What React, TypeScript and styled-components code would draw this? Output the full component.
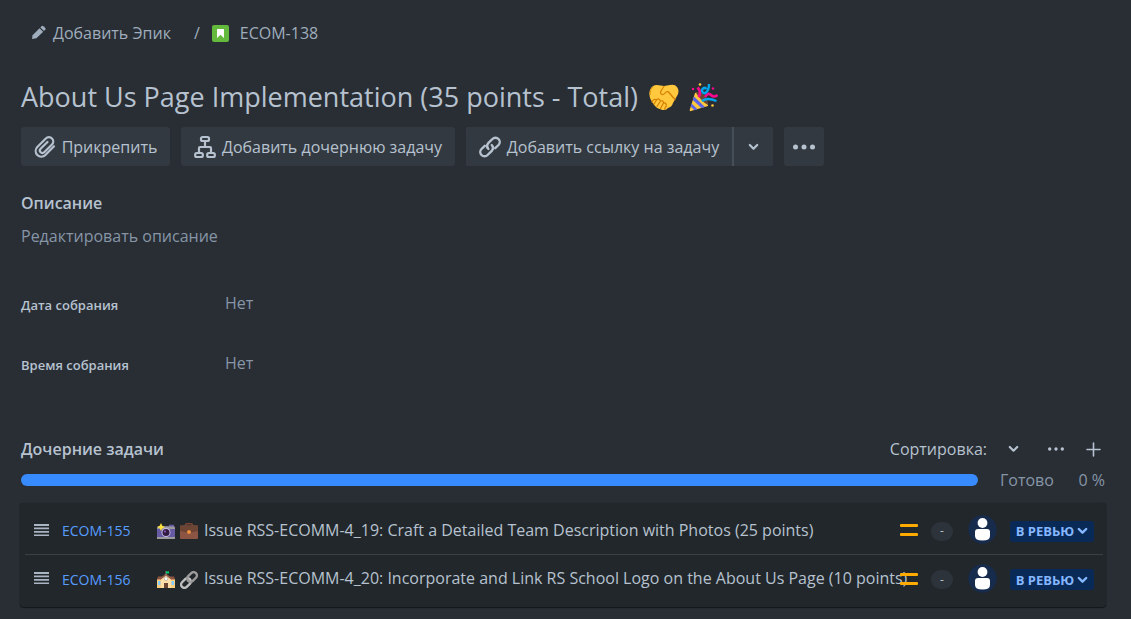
import React from "react";
import styled, { createGlobalStyle } from "styled-components";

const GlobalStyle = createGlobalStyle`
  *, *::before, *::after { box-sizing: border-box; }
  body {
    margin: 0;
    background: #292d34;
    color: #b6c2cf;
    font-family: "Open Sans", "Noto Sans", sans-serif;
    font-size: 16px;
    line-height: 20px;
  }
  button { font: inherit; color: inherit; border: 0; background: none; padding: 0; cursor: pointer; }
  a { text-decoration: none; color: inherit; }
  h1, h2, p, dl, dt, dd, ul { margin: 0; padding: 0; font-weight: 400; }
  svg { display: block; flex: none; }
`;

const Page = styled.main`
  padding: 22px 25px 12px 21px;
`;

const Breadcrumbs = styled.nav`
  display: flex;
  align-items: center;
  height: 22px;
  padding-left: 10px;
  color: #9fadbc;
`;

const EpicButton = styled.button`
  display: flex;
  align-items: center;
  gap: 6px;
`;

const Separator = styled.span`
  margin: 0 12px 0 23px;
`;

const IssueLink = styled.a`
  display: flex;
  align-items: center;
  gap: 11px;
`;

const Title = styled.h1`
  display: flex;
  align-items: center;
  gap: 10px;
  margin-top: 33px;
  font-size: 27px;
  line-height: 40px;
  white-space: nowrap;
`;

const TitleText = styled.span`
  margin-right: 1px;
`;

const Toolbar = styled.div`
  display: flex;
  margin-top: 10px;
  gap: 11px;
`;

const ToolButton = styled.button<{ $width: number; $side?: "left" | "right" }>`
  display: flex;
  align-items: center;
  justify-content: center;
  gap: 6px;
  width: ${(p) => p.$width}px;
  height: 39px;
  background: #333940;
  white-space: nowrap;
  border-radius: ${(p) =>
    p.$side === "left" ? "3px 0 0 3px" : p.$side === "right" ? "0 3px 3px 0" : "3px"};
`;

const SplitButton = styled.div`
  display: flex;
  gap: 2px;
  border-radius: 3px;
  background: #454f59;
`;

const SectionTitle = styled.h2`
  font-size: 16px;
  font-weight: 600;
  line-height: 20px;
`;

const Description = styled.section`
  margin-top: 27px;
`;

const EditDescription = styled.button`
  display: block;
  margin-top: 13px;
  color: #8696a7;
`;

const Fields = styled.dl`
  display: grid;
  grid-template-columns: 204px 1fr;
  row-gap: 40px;
  margin-top: 47px;
`;

const FieldName = styled.dt`
  padding-top: 2px;
  font-size: 13px;
  font-weight: 600;
  line-height: 20px;
  height: 20px;
`;

const FieldValue = styled.dd`
  color: #8696a7;
`;

const Children = styled.section`
  margin-top: 66px;
`;

const ChildrenHeader = styled.div`
  display: flex;
  align-items: center;
  height: 20px;
`;

const HeaderActions = styled.div`
  display: flex;
  align-items: center;
  margin-left: auto;
  padding-right: 5px;
`;

const SortLabel = styled.span`
  margin-right: 21px;
`;

const IconButton = styled.button<{ $gap?: number }>`
  display: flex;
  align-items: center;
  margin-left: ${(p) => p.$gap || 0}px;
`;

const ProgressRow = styled.div`
  display: flex;
  align-items: center;
  margin-top: 11px;
  color: #8696a7;
`;

const Track = styled.div`
  flex: 1;
  height: 12px;
  border-radius: 6px;
  background: #388bff;
`;

const ProgressLabel = styled.div`
  display: flex;
  justify-content: space-between;
  width: 108px;
  padding: 0 1px 0 2px;
  margin-left: 20px;
`;

const List = styled.ul`
  list-style: none;
  margin: 13px 0 0 -1px;
  padding: 3px 3px 3px 5px;
  border-radius: 4px;
  background: #22272b;
  box-shadow: 0 1px 1px rgba(3, 4, 4, 0.5), 0 0 1px rgba(3, 4, 4, 0.5);
`;

const Row = styled.li`
  display: flex;
  align-items: center;
  height: 48px;
  padding: 2px 9px 0 9px;
  & + & {
    height: 50px;
    border-top: 1px solid #3a4045;
    padding-top: 0;
  }
`;

const Key = styled.a`
  width: 95px;
  margin-left: 13px;
  color: #579dff;
  font-size: 14px;
  line-height: 20px;
`;

const Summary = styled.div`
  display: flex;
  flex: 1;
  min-width: 0;
  align-items: center;
  gap: 5px;
  white-space: nowrap;
`;

const SummaryText = styled.a`
  margin-left: 1px;
  padding-bottom: 3px;
`;

const Priority = styled.span`
  position: relative;
  margin-right: 13px;
`;

const Estimate = styled.button`
  width: 22px;
  height: 19px;
  border-radius: 10px;
  background: #2c333a;
  font-size: 12px;
  line-height: 18px;
`;

const Avatar = styled.span`
  margin: 0 13px 0 15px;
  padding-bottom: 3px;
`;

const Status = styled.button`
  display: flex;
  align-items: center;
  justify-content: center;
  gap: 3px;
  width: 84px;
  height: 21px;
  border-radius: 3px;
  background: #092957;
  color: #85b8ff;
  font-size: 13px;
  font-weight: 700;
  line-height: 20px;
  white-space: nowrap;
`;

const Pencil = () => (
  <svg width="16" height="16" viewBox="0 0 16 16" fill="#9fadbc" aria-hidden="true">
    <path d="M1 14 1.600 10.200 8.500 3.300 12.200 6.800 5.400 13.200Z" />
    <path d="M9.300 2.500 10.800 1.100Q11.600.5 12.400 1.200L14.300 3Q15 3.800 14.400 4.500L13 6Z" />
  </svg>
);

const Story = () => (
  <svg width="17" height="17" viewBox="0 0 17 17" aria-hidden="true">
    <rect width="17" height="17" rx="2" fill="#63ba3c" />
    <path d="M5 4.6Q5 4 5.600 4H11.400Q12 4 12 4.600V13L8.500 9.800 5 13Z" fill="#fff" />
  </svg>
);

const Clip = () => (
  <svg width="22" height="24" viewBox="0 0 22 24" fill="none" stroke="#b6c2cf" strokeWidth="2.2" strokeLinecap="round" aria-hidden="true">
    <path d="M20 11.300 11.400 20A5.600 5.600 0 0 1 3.300 20 5.800 5.800 0 0 1 3.300 12L11.800 3.500A4.200 4.200 0 0 1 18 3.600 4.300 4.300 0 0 1 18 9.600L10.200 17.300A2.500 2.500 0 0 1 6.600 17.300 2.500 2.500 0 0 1 6.600 13.800L13.500 7" />
  </svg>
);

const Tree = () => (
  <svg width="22" height="24" viewBox="0 0 22 24" fill="none" stroke="#b6c2cf" strokeWidth="2.2" aria-hidden="true">
    <rect x="7" y="2" width="8" height="4" rx="1.5" />
    <rect x="1.2" y="18" width="7.600" height="4" rx="1.5" />
    <rect x="13.2" y="18" width="7.600" height="4" rx="1.5" />
    <path d="M11 6V12M5 18V13Q5 12 6 12H16Q17 12 17 13V18" />
  </svg>
);

const Link = () => (
  <svg width="22" height="22" viewBox="0 0 22 22" fill="none" stroke="#b6c2cf" strokeWidth="2.4" strokeLinecap="round" aria-hidden="true">
    <path d="M9.400 13A4.200 4.200 0 0 1 9 7.400L13.400 3A4.200 4.200 0 0 1 19.500 3 4.300 4.300 0 0 1 19.500 9L16.200 12.200" />
    <path d="M12.700 9A4.200 4.200 0 0 1 13 14.600L8.600 19A4.200 4.200 0 0 1 2.500 19 4.300 4.300 0 0 1 2.500 13L5.800 9.800" />
  </svg>
);

const Chevron = ({ color = "#b6c2cf", thick = 2.2 }: { color?: string; thick?: number }) => (
  <svg width="11" height="8" viewBox="0 0 11 8" fill="none" stroke={color} strokeWidth={thick} strokeLinecap="round" strokeLinejoin="round" aria-hidden="true">
    <path d="M1.800 2 5.500 5.700 9.200 2" />
  </svg>
);

const Dots = ({ size }: { size: number }) => (
  <svg width={size} height="6" viewBox={`0 0 ${size} 6`} fill="#b6c2cf" aria-hidden="true">
    {[0, 1, 2].map((i) => {
      const r = size > 20 ? 2.5 : 1.7;
      return <circle key={i} cx={r + (i * (size - 2 * r)) / 2} cy="3" r={r} />;
    })}
  </svg>
);

const Plus = () => (
  <svg width="15" height="15" viewBox="0 0 15 15" stroke="#b6c2cf" strokeWidth="1.6" strokeLinecap="round" aria-hidden="true">
    <path d="M7.500 1V14M1 7.500H14" />
  </svg>
);

const Handle = () => (
  <svg width="15" height="15" viewBox="0 0 15 15" fill="#a9b5c2" aria-hidden="true">
    <path d="M0 0H15V2H0ZM0 3.500H15V5.200H0ZM0 7H15V8.700H0ZM0 10.500H15V12H0Z" />
  </svg>
);

const MediumIcon = () => (
  <svg width="18" height="14" viewBox="0 0 18 14" fill="#ffab00" role="img" aria-label="Medium">
    <rect width="18" height="3" rx="1" />
    <rect y="9" width="18" height="3" rx="1" />
  </svg>
);

const Person = () => (
  <svg width="29" height="29" viewBox="0 0 29 29" aria-hidden="true">
    <circle cx="14.500" cy="14.500" r="14.200" fill="#172b4d" />
    <circle cx="14.500" cy="8" r="4.900" fill="#fff" />
    <path d="M7 17Q7 14 10 14H19Q22 14 22 17V21Q22 25.500 14.500 25.500T7 21Z" fill="#fff" />
  </svg>
);

const Handshake = () => (
  <svg width="30" height="26" viewBox="0 0 30 26" aria-hidden="true">
    <path d="M8 1Q3 1 1 6-1 12 3 18L6 22Q8 25 12 25.500 17 27 19 24 23 23 24 19L28 12Q31 7 28 3 26 0 21 1L15 2Z" fill="#ffc83d" />
    <path d="M15 2.500 12.500 6Q10.500 9.500 13 10.500 15 11 17 8L19 7.500 26 15.500M3 18Q5 14 7.500 16 10 13.500 11.500 17 14.500 16 14.500 19 17.500 18.500 17.300 22M7.500 16 5 20M11.500 17 8 22.500M14.500 19 11.500 24.500M17.300 22 15.500 25" fill="none" stroke="#d67d00" strokeWidth="1.2" strokeLinecap="round" strokeLinejoin="round" />
    <path d="M1.200 11Q.8 5 4 2.500" fill="none" stroke="#e39d10" strokeWidth="1" />
  </svg>
);

const Party = () => (
  <svg width="29" height="29" viewBox="0 0 29 29" aria-hidden="true">
    <path d="M6 10 19 23Q17 16 12 11 8 8 6 10Z" fill="#6d4534" />
    <path d="M6 10Q10 9 14 14 19 19 19 23L2 28Q.5 28.500 .7 27Z" fill="#ffc83d" />
    <path d="M7 10Q11 8 15 12T19 22Q13 19 7 10Z" fill="#6d4534" />
    <path d="M5 13.500 16 24 12.500 25 3.800 17ZM2.500 20.500 8.500 26.200 5.500 27.200 1.600 23.500Z" fill="#5b63e8" />
    <path d="M9.500 14Q13 9 8.500 4.500" fill="none" stroke="#f70a8d" strokeWidth="2.600" />
    <path d="M16 14Q19 9 22 12T28.500 12" fill="none" stroke="#f70a8d" strokeWidth="2.600" />
    <path d="M13 18Q18 14 27.500 18M20 1Q20 7 17 9.500A2.500 2.500 0 1 1 17.500 6" fill="none" stroke="#00a6ed" strokeWidth="2.400" />
    <circle cx="11" cy="1.500" r="1.300" fill="#ffc83d" />
    <circle cx="23.500" cy="22.500" r="1.300" fill="#ffc83d" />
    <circle cx="4" cy="6" r="1.200" fill="#f70a8d" />
    <circle cx="24" cy="5.500" r="1.200" fill="#f70a8d" />
  </svg>
);

const Camera = () => (
  <svg width="18" height="16" viewBox="0 0 18 16" aria-hidden="true">
    <path d="M0 5 2 3H12V1.800H17V3L18 4V15H0Z" fill="#675aa5" />
    <path d="M0 5 1 3.500H17L18 5V6H0ZM0 14H18V16H0Z" fill="#9b9b9b" />
    <circle cx="9" cy="9.500" r="4.500" fill="#c5b9e8" />
    <circle cx="9" cy="9.500" r="3.500" fill="#321b41" />
    <circle cx="8" cy="8.500" r="1" fill="#8d65c5" />
    <path d="M4 0 5.300 2.700 8 4 5.300 5.300 4 8 2.700 5.300 0 4 2.700 2.700Z" fill="#ffe03b" />
  </svg>
);

const Briefcase = () => (
  <svg width="18" height="16" viewBox="0 0 18 16" aria-hidden="true">
    <path d="M5.500 3V2Q5.500 .7 7 .7H11Q12.500 .7 12.500 2V3" fill="none" stroke="#7d4533" strokeWidth="1.400" />
    <rect y="2.500" width="18" height="13.500" rx="1" fill="#8c5543" />
    <path d="M0 3.500Q0 2.500 1 2.500H17Q18 2.500 18 3.500V8L9 10 0 8Z" fill="#6d4534" />
    <rect x="7.300" y="7.300" width="3.400" height="3.400" rx="1" fill="#f3933b" />
  </svg>
);

const School = () => (
  <svg width="18" height="17" viewBox="0 0 18 17" aria-hidden="true">
    <path d="M0 8H18V17H0Z" fill="#ffce7c" />
    <path d="M1 5.500H17L18 8.500H0Z" fill="#8c5543" />
    <path d="M4 17V7L9 3 14 7V17Z" fill="#ffdea7" />
    <path d="M3 7.500 9 2.500 15 7.500 14 8.500 9 4.500 4 8.500Z" fill="#8c5543" />
    <path d="M9 0V4" stroke="#9b9b9b" strokeWidth=".8" />
    <path d="M9 0Q11 1 12 0V2.300Q10.500 3 9 2Z" fill="#00d26a" />
    <circle cx="9" cy="7.700" r="1.800" fill="#fff" stroke="#9b9b9b" strokeWidth=".6" />
    <path d="M7 12H11V17H7Z" fill="#6d4534" />
    <path d="M1 10H3.500V14H1ZM14.500 10H17V14H14.500Z" fill="#83cbff" />
  </svg>
);

const Chain = () => (
  <svg width="18" height="18" viewBox="0 0 18 18" fill="none" aria-hidden="true">
    <g transform="rotate(-45 9 9)" strokeWidth="2.400">
      <rect x="-.8" y="5.700" width="11" height="6.600" rx="3.300" stroke="#bebebe" />
      <rect x="7.800" y="5.700" width="11" height="6.600" rx="3.300" stroke="#9b9b9b" />
    </g>
  </svg>
);

const issues = [
  {
    key: "ECOM-155",
    icons: [Camera, Briefcase],
    summary: "Issue RSS-ECOMM-4_19: Craft a Detailed Team Description with Photos (25 points)",
  },
  {
    key: "ECOM-156",
    icons: [School, Chain],
    summary: "Issue RSS-ECOMM-4_20: Incorporate and Link RS School Logo on the About Us Page (10 points)",
  },
];

const fields = [
  ["Дата собрания", "Нет"],
  ["Время собрания", "Нет"],
];

export default function App() {
  return (
    <>
      <GlobalStyle />
      <Page>
        <Breadcrumbs>
          <EpicButton>
            <Pencil />
            Добавить Эпик
          </EpicButton>
          <Separator>/</Separator>
          <IssueLink href="#ECOM-138">
            <Story />
            ECOM-138
          </IssueLink>
        </Breadcrumbs>

        <Title>
          <TitleText>About Us Page Implementation (35 points - Total)</TitleText>
          <Handshake />
          <Party />
        </Title>

        <Toolbar>
          <ToolButton $width={149}>
            <Clip />
            Прикрепить
          </ToolButton>
          <ToolButton $width={274}>
            <Tree />
            Добавить дочернюю задачу
          </ToolButton>
          <SplitButton>
            <ToolButton $width={266} $side="left">
              <Link />
              Добавить ссылку на задачу
            </ToolButton>
            <ToolButton $width={39} $side="right" aria-label="Ещё варианты">
              <Chevron />
            </ToolButton>
          </SplitButton>
          <ToolButton $width={40} aria-label="Действия">
            <Dots size={22} />
          </ToolButton>
        </Toolbar>

        <Description>
          <SectionTitle>Описание</SectionTitle>
          <EditDescription>Редактировать описание</EditDescription>
        </Description>

        <Fields>
          {fields.map(([name, value]) => (
            <React.Fragment key={name}>
              <FieldName>{name}</FieldName>
              <FieldValue>{value}</FieldValue>
            </React.Fragment>
          ))}
        </Fields>

        <Children>
          <ChildrenHeader>
            <SectionTitle>Дочерние задачи</SectionTitle>
            <HeaderActions>
              <SortLabel id="sort">Сортировка:</SortLabel>
              <IconButton aria-labelledby="sort">
                <Chevron />
              </IconButton>
              <IconButton $gap={29} aria-label="Действия">
                <Dots size={16} />
              </IconButton>
              <IconButton $gap={22} aria-label="Создать">
                <Plus />
              </IconButton>
            </HeaderActions>
          </ChildrenHeader>

          <ProgressRow>
            <Track />
            <ProgressLabel>
              <span>Готово</span>
              <span>0 %</span>
            </ProgressLabel>
          </ProgressRow>

          <List>
            {issues.map(({ key, icons, summary }) => (
              <Row key={key}>
                <Handle />
                <Key href={`#${key}`}>{key}</Key>
                <Summary>
                  {icons.map((Icon, i) => (
                    <Icon key={i} />
                  ))}
                  <SummaryText href={`#${key}`}>{summary}</SummaryText>
                </Summary>
                <Priority>
                  <MediumIcon />
                </Priority>
                <Estimate>-</Estimate>
                <Avatar>
                  <Person />
                </Avatar>
                <Status>
                  В РЕВЬЮ
                  <Chevron color="#85b8ff" thick={2.4} />
                </Status>
              </Row>
            ))}
          </List>
        </Children>
      </Page>
    </>
  );
}
